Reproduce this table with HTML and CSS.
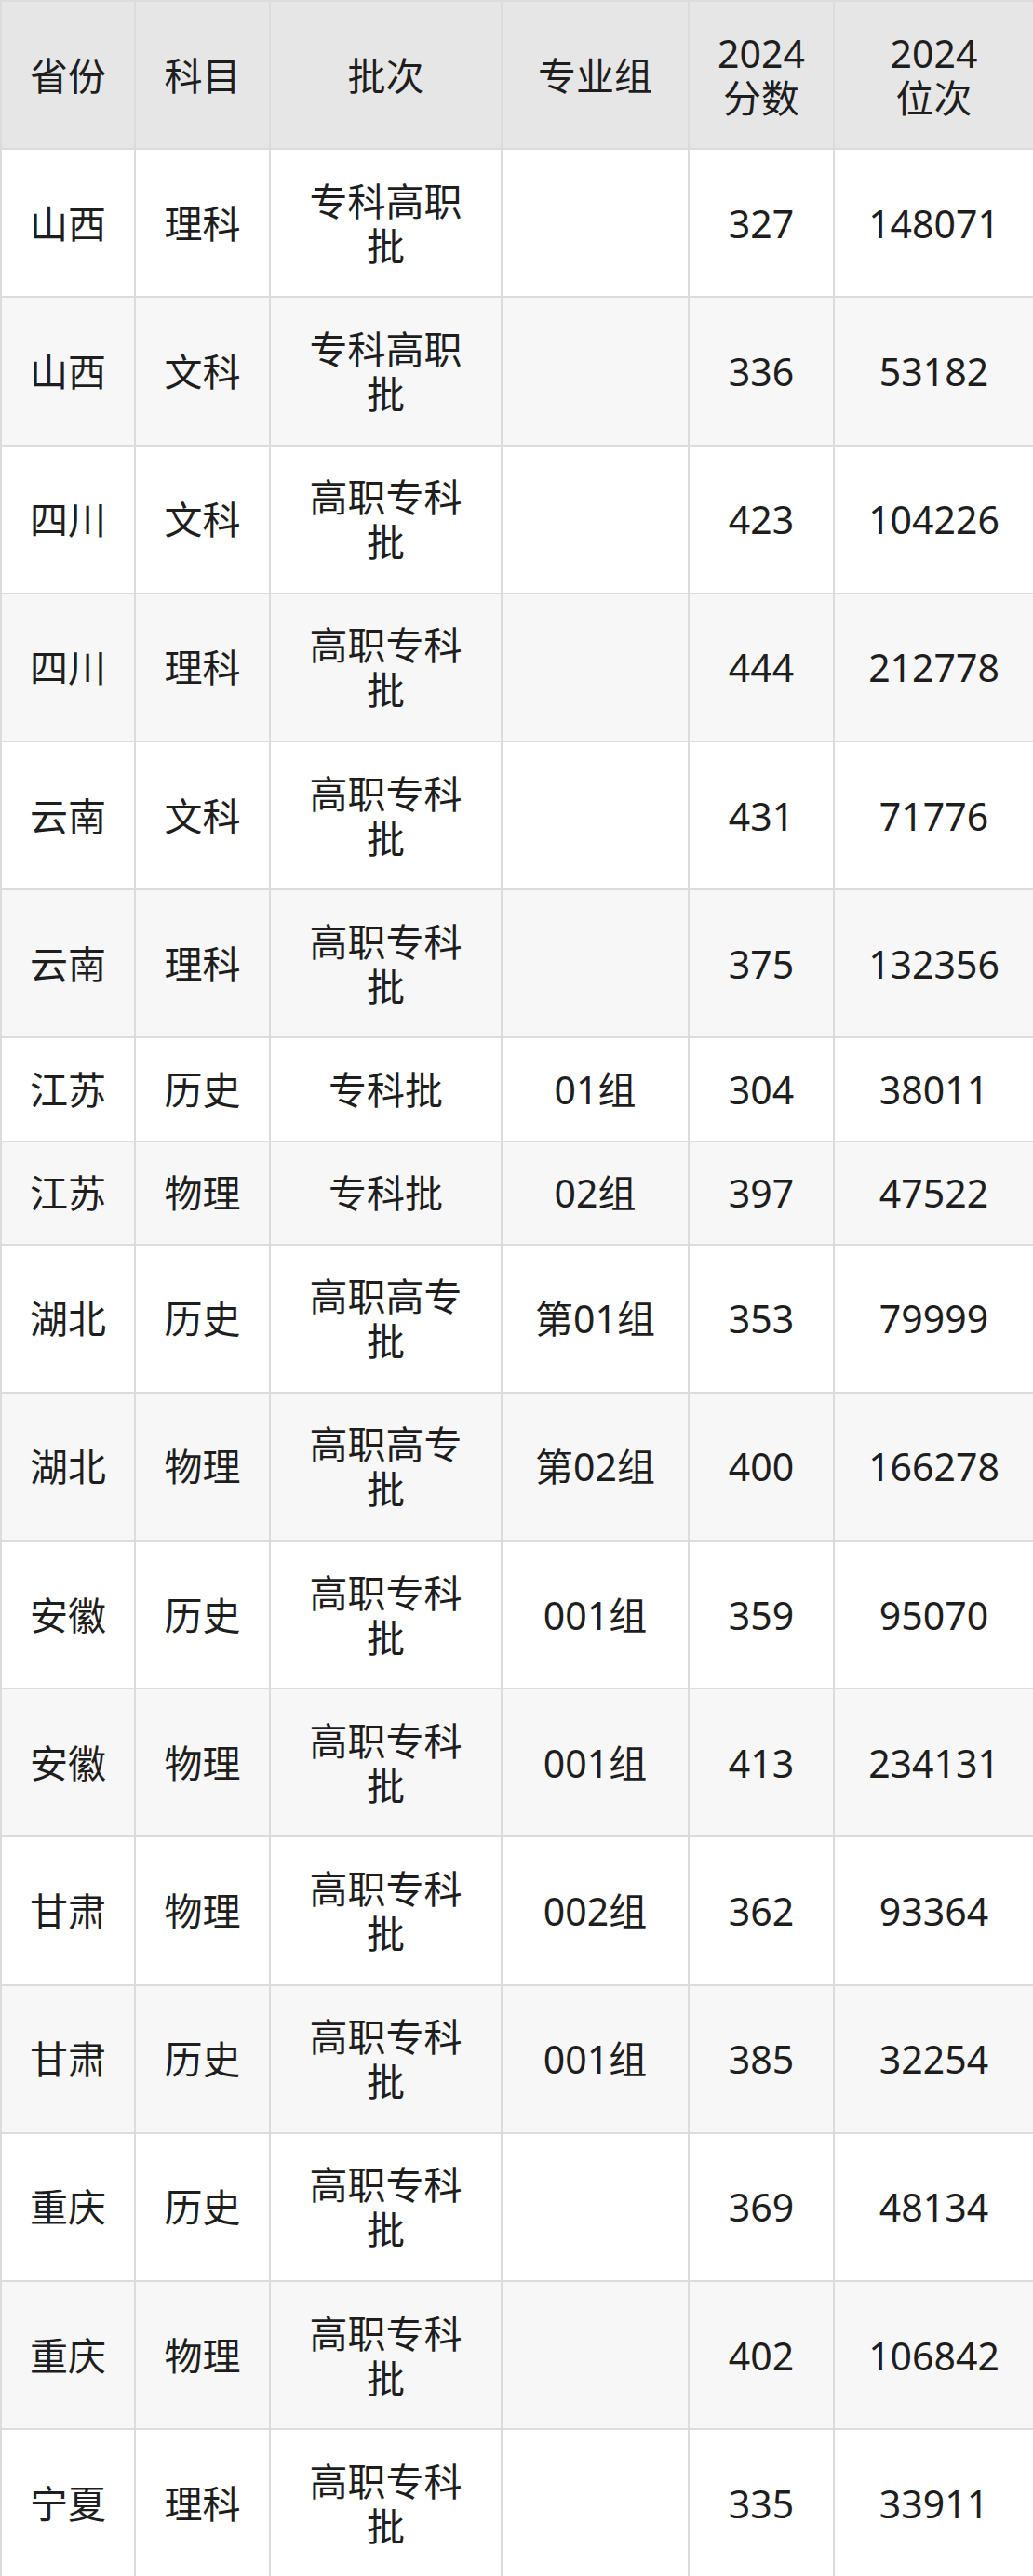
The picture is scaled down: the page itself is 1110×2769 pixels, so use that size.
FILE: index.html
```html
<!DOCTYPE html>
<html lang="zh">
<head>
<meta charset="utf-8">
<link rel="stylesheet" href="styles.css">
</head>
<body>
<table class="score-table">
  <colgroup>
    <col class="c1"><col class="c2"><col class="c3"><col class="c4"><col class="c5"><col class="c6">
  </colgroup>
  <thead>
    <tr><th>省份</th><th>科目</th><th>批次</th><th>专业组</th><th>2024<br>分数</th><th>2024<br>位次</th></tr>
  </thead>
  <tbody>
    <tr><td>山西</td><td>理科</td><td>专科高职批</td><td></td><td>327</td><td>148071</td></tr>
    <tr><td>山西</td><td>文科</td><td>专科高职批</td><td></td><td>336</td><td>53182</td></tr>
    <tr><td>四川</td><td>文科</td><td>高职专科批</td><td></td><td>423</td><td>104226</td></tr>
    <tr><td>四川</td><td>理科</td><td>高职专科批</td><td></td><td>444</td><td>212778</td></tr>
    <tr><td>云南</td><td>文科</td><td>高职专科批</td><td></td><td>431</td><td>71776</td></tr>
    <tr><td>云南</td><td>理科</td><td>高职专科批</td><td></td><td>375</td><td>132356</td></tr>
    <tr><td>江苏</td><td>历史</td><td>专科批</td><td>01组</td><td>304</td><td>38011</td></tr>
    <tr><td>江苏</td><td>物理</td><td>专科批</td><td>02组</td><td>397</td><td>47522</td></tr>
    <tr><td>湖北</td><td>历史</td><td>高职高专批</td><td>第01组</td><td>353</td><td>79999</td></tr>
    <tr><td>湖北</td><td>物理</td><td>高职高专批</td><td>第02组</td><td>400</td><td>166278</td></tr>
    <tr><td>安徽</td><td>历史</td><td>高职专科批</td><td>001组</td><td>359</td><td>95070</td></tr>
    <tr><td>安徽</td><td>物理</td><td>高职专科批</td><td>001组</td><td>413</td><td>234131</td></tr>
    <tr><td>甘肃</td><td>物理</td><td>高职专科批</td><td>002组</td><td>362</td><td>93364</td></tr>
    <tr><td>甘肃</td><td>历史</td><td>高职专科批</td><td>001组</td><td>385</td><td>32254</td></tr>
    <tr><td>重庆</td><td>历史</td><td>高职专科批</td><td></td><td>369</td><td>48134</td></tr>
    <tr><td>重庆</td><td>物理</td><td>高职专科批</td><td></td><td>402</td><td>106842</td></tr>
    <tr><td>宁夏</td><td>理科</td><td>高职专科批</td><td></td><td>335</td><td>33911</td></tr>
  </tbody>
</table>
</body>
</html>
```

FILE: styles.css
```css
html, body {
  margin: 0;
  padding: 0;
  background: #ffffff;
}
.score-table {
  width: 1110px;
  table-layout: fixed;
  border-collapse: collapse;
  font-family: "Noto Sans", "Noto Sans CJK SC", sans-serif;
  font-size: 41px;
  line-height: 48px;
  color: #1e1e1e;
}
.c1 { width: 144px; }
.c2 { width: 145px; }
.c3 { width: 249px; }
.c4 { width: 201px; }
.c5 { width: 156px; }
.c6 { width: 215px; }
.score-table th,
.score-table td {
  border: 2px solid #dcdcdc;
  padding: 30.6px 12px;
  text-align: center;
  vertical-align: middle;
  font-weight: normal;
}
.score-table th:nth-child(3),
.score-table td:nth-child(3) {
  padding-left: 30px;
  padding-right: 30px;
}
.score-table thead th {
  background: #e6e6e6;
}
.score-table tbody tr:nth-child(even) td {
  background: #f7f7f7;
}
```
